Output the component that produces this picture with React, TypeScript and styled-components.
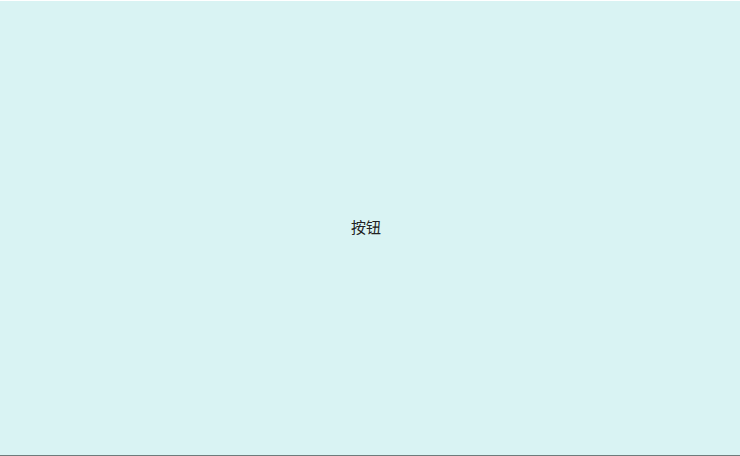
import React from "react";
import styled, { createGlobalStyle } from "styled-components";

const Global = createGlobalStyle`
  html, body { margin: 0; padding: 0; background: #ffffff; }
  body { font-family: "Noto Sans CJK SC", "Liberation Sans", sans-serif; }
`;

const Page = styled.div`
  width: 740px;
  height: 456px;
  padding-top: 1px;
  box-sizing: border-box;
  display: flex;
  flex-direction: column;
`;

const BigButton = styled.button`
  flex: 1;
  display: flex;
  align-items: center;
  justify-content: center;
  margin: 0;
  padding: 0 8px 3px 0;
  border: none;
  border-bottom: 1px solid #6f7b7b;
  background: #d9f3f3;
  color: #222222;
  font-family: "Noto Sans CJK SC", "Liberation Sans", sans-serif;
  font-size: 15px;
  line-height: 20px;
  cursor: pointer;
`;

export default function App() {
  return (
    <>
      <Global />
      <Page>
        <BigButton type="button">按钮</BigButton>
      </Page>
    </>
  );
}
